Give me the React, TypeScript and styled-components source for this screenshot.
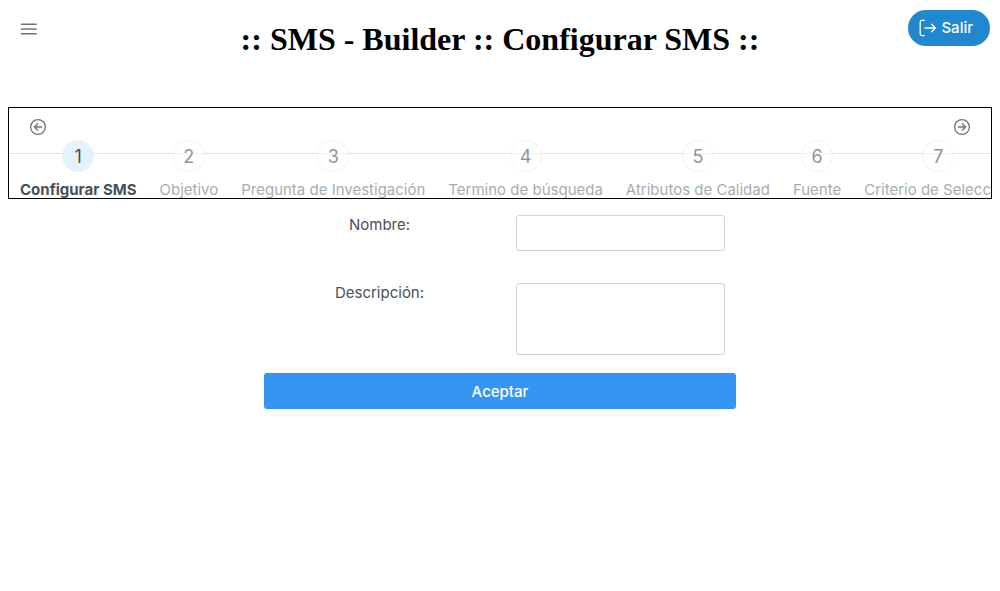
import React from "react";
import styled, { createGlobalStyle } from "styled-components";

const GlobalStyle = createGlobalStyle`
  *, *::before, *::after { box-sizing: border-box; }
  body {
    margin: 0;
    padding: 8px;
    background: #ffffff;
    color: #495057;
    font-family: Inter, "Liberation Sans", sans-serif;
    font-size: 15px;
    line-height: 20px;
  }
  button, input, textarea { font: inherit; }
`;

const Header = styled.header`
  display: grid;
  grid-template-columns: 1fr auto 1fr;
  align-items: start;
  padding: 2px 2px 0;
  margin-bottom: 49px;
`;

const Title = styled.h1`
  margin: 11px 0 0;
  color: #000000;
  font-family: "Liberation Serif", serif;
  font-size: 32px;
  font-weight: 700;
  line-height: 37px;
`;

const IconButton = styled.button`
  display: inline-flex;
  padding: 0;
  border: 0;
  background: transparent;
  color: #6c757d;
  cursor: pointer;
`;

const MenuButton = styled(IconButton)`
  justify-self: start;
  padding: 10px;
`;

const ExitButton = styled.button`
  display: inline-flex;
  align-items: center;
  justify-self: end;
  gap: 4px;
  height: 36px;
  padding: 0 17px 0 11px;
  border: 0;
  border-radius: 18px;
  background: #2188d0;
  color: #ffffff;
  font-weight: 500;
  cursor: pointer;
`;

const StepsPanel = styled.nav`
  overflow: hidden;
  border: 1px solid #000000;
  padding-top: 10px;
`;

const StepsControls = styled.div`
  display: flex;
  justify-content: space-between;
  padding: 0 20px 4px;
`;

const StepList = styled.ol`
  display: flex;
  height: 58px;
  margin: 0;
  padding: 0;
  list-style: none;
`;

const StepItem = styled.li`
  position: relative;
  flex: none;
  &::before {
    content: "";
    position: absolute;
    top: 13px;
    left: 0;
    width: 100%;
    border-top: 1px solid #dee2e6;
  }
`;

const StepLink = styled.a<{ $active: boolean }>`
  position: relative;
  display: flex;
  flex-direction: column;
  align-items: center;
  gap: 8px;
  padding: 0 12px 0 11px;
  color: ${(p) => (p.$active ? "#495057" : "#6c757d")};
  font-weight: ${(p) => (p.$active ? 700 : 400)};
  opacity: ${(p) => (p.$active ? 1 : 0.6)};
  text-decoration: none;
  white-space: nowrap;
`;

const StepNumber = styled.span<{ $active: boolean }>`
  display: flex;
  align-items: center;
  justify-content: center;
  width: 32px;
  height: 32px;
  padding-top: 2px;
  border: 1px solid ${(p) => (p.$active ? "#e3f2fd" : "#e9ecef")};
  border-radius: 50%;
  background: ${(p) => (p.$active ? "#e3f2fd" : "#ffffff")};
  color: #495057;
  font-size: 18px;
  font-weight: 400;
`;

const Form = styled.form`
  display: grid;
  grid-template-columns: 1fr 1fr;
  width: 50%;
  min-width: 320px;
  max-width: 482px;
  margin: 16px auto 0;
`;

const Label = styled.label`
  text-align: center;
`;

const Field = styled.div`
  display: flex;
  padding: 0 16px;
`;

const TextInput = styled.input`
  width: 100%;
  height: 36px;
  margin-bottom: 32px;
  padding: 8px;
  border: 1px solid #ced4da;
  border-radius: 3px;
  background: #ffffff;
  color: #495057;
`;

const TextArea = styled.textarea`
  width: 100%;
  height: 72px;
  margin-bottom: 18px;
  padding: 8px;
  border: 1px solid #ced4da;
  border-radius: 3px;
  background: #ffffff;
  color: #495057;
  resize: none;
`;

const SubmitButton = styled.button`
  grid-column: 1 / -1;
  height: 36px;
  margin: 0 5px;
  padding: 2px 16px 0;
  border: 0;
  border-radius: 3px;
  background: #3595f2;
  color: #ffffff;
  font-weight: 500;
  cursor: pointer;
`;

const MenuIcon = () => (
  <svg width="18" height="18" viewBox="0 0 18 18" fill="none" stroke="currentColor" strokeWidth="1.4" strokeLinecap="round" aria-hidden="true">
    <path d="M1.4 4.3h14.8M1.4 9h14.8M1.4 13.7h14.8" />
  </svg>
);

const ExitIcon = () => (
  <svg width="18" height="18" viewBox="0 0 18 18" fill="none" stroke="currentColor" strokeWidth="1.3" strokeLinecap="round" strokeLinejoin="round" aria-hidden="true">
    <path d="M5.4 1.4H3A1.8 1.8 0 0 0 1.2 3.2v11.6A1.8 1.8 0 0 0 3 16.6h2.4M6 9h10.4M12.6 5.2 16.4 9l-3.8 3.8" />
  </svg>
);

const ArrowCircle = ({ forward = false }: { forward?: boolean }) => (
  <svg width="18" height="18" viewBox="0 0 18 18" fill="none" stroke="currentColor" strokeWidth="1.3" strokeLinecap="round" strokeLinejoin="round" aria-hidden="true">
    <circle cx="9" cy="9" r="7.4" />
    <path d={forward ? "M5.4 9h7.2M9.4 5.8 12.6 9l-3.2 3.2" : "M12.6 9H5.4M8.6 5.8 5.4 9l3.2 3.2"} />
  </svg>
);

const steps = [
  "Configurar SMS",
  "Objetivo",
  "Pregunta de Investigación",
  "Termino de búsqueda",
  "Atributos de Calidad",
  "Fuente",
  "Criterio de Selección",
];

export default function App() {
  return (
    <>
      <GlobalStyle />
      <Header>
        <MenuButton type="button" aria-label="Menú">
          <MenuIcon />
        </MenuButton>
        <Title>:: SMS - Builder :: Configurar SMS ::</Title>
        <ExitButton type="button">
          <ExitIcon />
          Salir
        </ExitButton>
      </Header>
      <main>
        <StepsPanel aria-label="Pasos">
          <StepsControls>
            <IconButton type="button" aria-label="Anterior">
              <ArrowCircle />
            </IconButton>
            <IconButton type="button" aria-label="Siguiente">
              <ArrowCircle forward />
            </IconButton>
          </StepsControls>
          <StepList>
            {steps.map((step, index) => (
              <StepItem key={step}>
                <StepLink href="#" $active={index === 0} aria-current={index === 0 ? "step" : undefined}>
                  <StepNumber $active={index === 0}>{index + 1}</StepNumber>
                  {step}
                </StepLink>
              </StepItem>
            ))}
          </StepList>
        </StepsPanel>
        <Form>
          <Label htmlFor="nombre">Nombre:</Label>
          <Field>
            <TextInput id="nombre" type="text" />
          </Field>
          <Label htmlFor="descripcion">Descripción:</Label>
          <Field>
            <TextArea id="descripcion" />
          </Field>
          <SubmitButton type="submit">Aceptar</SubmitButton>
        </Form>
      </main>
    </>
  );
}
